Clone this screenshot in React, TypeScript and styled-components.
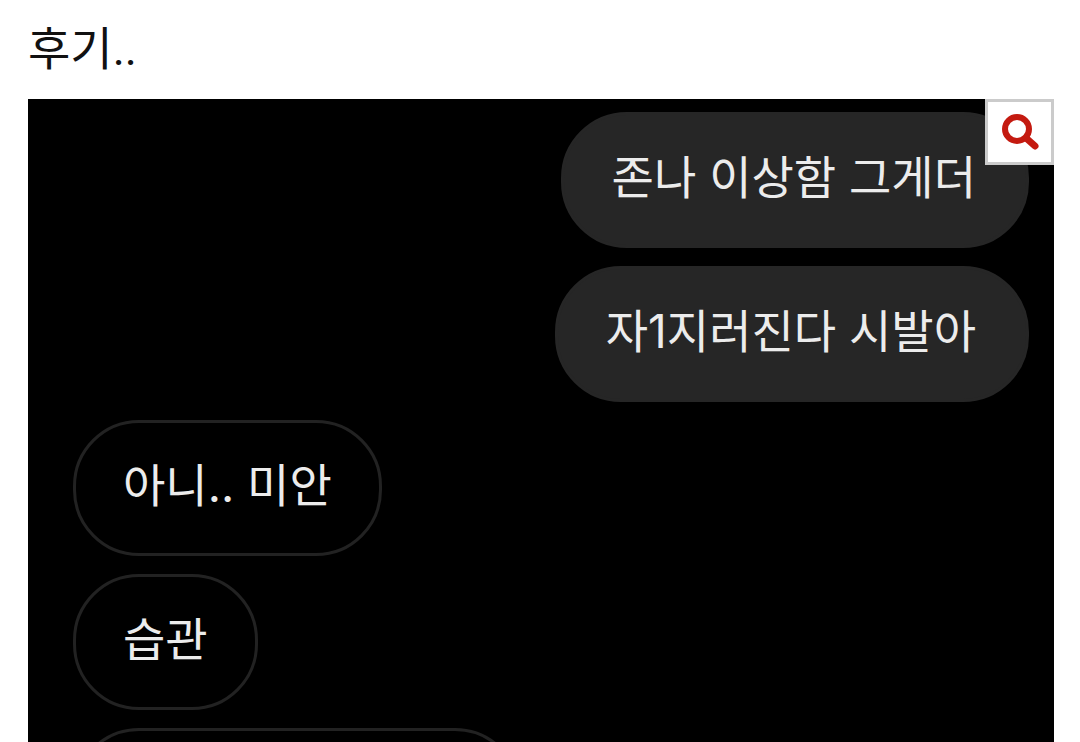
import React from 'react';
import styled, { createGlobalStyle } from 'styled-components';

const GlobalStyle = createGlobalStyle`
  * { box-sizing: border-box; }
  body {
    margin: 0;
    background: #fff;
    font-family: Roboto, "Noto Sans CJK KR", sans-serif;
  }
`;

const Page = styled.main`
  display: flex;
  flex-direction: column;
  height: 100vh;
  padding: 17px 26px 0 28px;
  overflow: hidden;
`;

const Title = styled.h1`
  margin: 0 0 18px;
  color: #111;
  font-size: 46px;
  font-weight: 400;
  line-height: 64px;
`;

const Chat = styled.section`
  position: relative;
  flex: 1 0 auto;
  background: #000;
`;

const Thread = styled.ul`
  display: flex;
  flex-direction: column;
  gap: 18px;
  margin: 0;
  padding: 13px 25px 0 45px;
  list-style: none;
  font-family: Inter, "Noto Sans CJK KR", sans-serif;
`;

const Bubble = styled.li<{ $sent?: boolean; $empty?: boolean }>`
  align-self: ${(p) => (p.$sent ? 'flex-end' : 'flex-start')};
  height: 136px;
  width: ${(p) => (p.$empty ? '448px' : 'auto')};
  padding: ${(p) => (p.$sent ? '30px 50px 30px 48px' : '30px 47px')};
  border: 3px solid ${(p) => (p.$sent ? '#262626' : '#222')};
  border-radius: 66px;
  background: ${(p) => (p.$sent ? '#262626' : '#000')};
  color: #ececec;
  font-size: 46px;
  line-height: 64px;
  white-space: nowrap;
`;

const ZoomButton = styled.button`
  position: absolute;
  top: 0;
  right: 0;
  display: flex;
  align-items: center;
  justify-content: center;
  width: 69px;
  height: 66px;
  padding: 0;
  border: 3px solid #cbcbcb;
  background: #fff;
  cursor: pointer;
`;

const messages = [
  { text: '존나 이상함 그게더', sent: true },
  { text: '자1지러진다 시발아', sent: true },
  { text: '아니.. 미안', sent: false },
  { text: '습관', sent: false },
  { text: '', sent: false },
];

function MagnifierIcon() {
  return (
    <svg width="40" height="40" viewBox="0 0 40 40" fill="none" stroke="#c41a10" aria-hidden="true">
      <circle cx="17" cy="17" r="12" strokeWidth="6" />
      <path d="M26 26L35 34" strokeWidth="7" strokeLinecap="round" />
    </svg>
  );
}

export default function App() {
  return (
    <>
      <GlobalStyle />
      <Page>
        <Title>후기..</Title>
        <Chat>
          <Thread>
            {messages.map((m, i) => (
              <Bubble key={i} $sent={m.sent} $empty={!m.text}>
                {m.text}
              </Bubble>
            ))}
          </Thread>
          <ZoomButton type="button" aria-label="확대">
            <MagnifierIcon />
          </ZoomButton>
        </Chat>
      </Page>
    </>
  );
}
